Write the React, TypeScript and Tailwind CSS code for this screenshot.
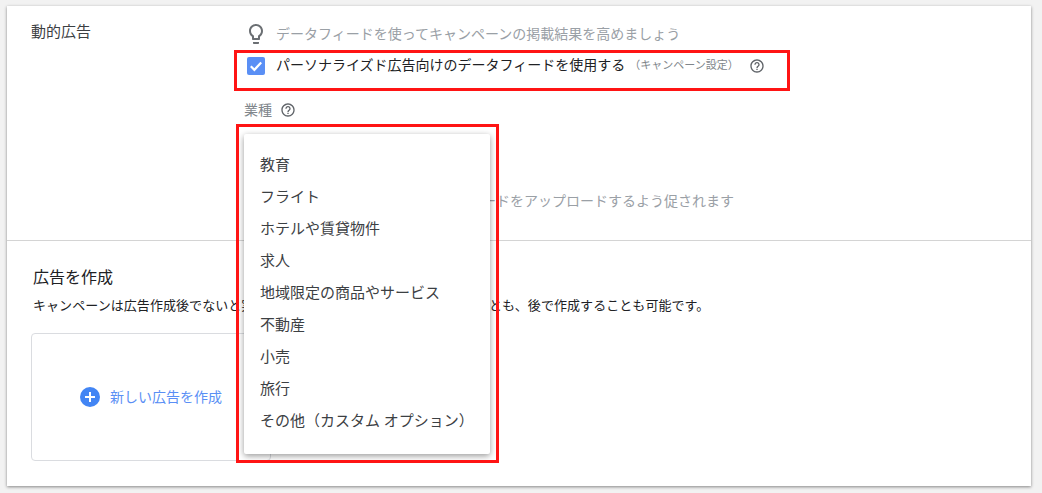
const INDUSTRIES = [
  '教育',
  'フライト',
  'ホテルや賃貸物件',
  '求人',
  '地域限定の商品やサービス',
  '不動産',
  '小売',
  '旅行',
  'その他（カスタム オプション）',
];

function HelpIcon() {
  return (
    <svg viewBox="0 0 24 24" className="w-4 h-4 fill-[#5f6368] shrink-0">
      <path d="M11 18h2v-2h-2v2zm1-16C6.48 2 2 6.48 2 12s4.48 10 10 10 10-4.48 10-10S17.52 2 12 2zm0 18c-4.41 0-8-3.59-8-8s3.59-8 8-8 8 3.59 8 8-3.59 8-8 8zm0-14c-2.21 0-4 1.79-4 4h2c0-1.1.9-2 2-2s2 .9 2 2c0 2-3 1.75-3 5h2c0-2.25 3-2.5 3-5 0-2.21-1.79-4-4-4z" />
    </svg>
  );
}

function BulbIcon() {
  return (
    <svg viewBox="0 0 24 24" className="w-6 h-6 fill-[#6b6f73] shrink-0">
      <path d="M9 21c0 .55.45 1 1 1h4c.55 0 1-.45 1-1v-1H9v1zm3-19C8.14 2 5 5.14 5 9c0 2.38 1.19 4.47 3 5.74V17c0 .55.45 1 1 1h6c.55 0 1-.45 1-1v-2.26c1.81-1.27 3-3.36 3-5.74 0-3.86-3.14-7-7-7zm2.85 11.1l-.85.6V16h-4v-2.3l-.85-.6C7.8 12.16 7 10.63 7 9c0-2.76 2.24-5 5-5s5 2.24 5 5c0 1.63-.8 3.16-2.15 4.1z" />
    </svg>
  );
}

export default function App() {
  return (
    <div className="h-[493px] overflow-hidden bg-[#f2f2f2] pt-[6px] pl-[7px] pr-[11px] font-['Roboto','Noto_Sans_CJK_JP',sans-serif]">
      <div className="relative h-[480px] bg-white shadow-[0_1px_3px_rgba(0,0,0,0.45)]">
        {/* Dynamic ads settings */}
        <div className="flex h-[235px] border-b border-[#d4d4d4] pl-[24px] pt-[16px]">
          <div className="w-[213px] shrink-0 text-[15px] leading-5 text-[#3c4043]">動的広告</div>
          <div className="flex flex-col">
            <div className="flex h-6 items-center gap-2">
              <BulbIcon />
              <span className="text-[14px] text-[#9aa0a6]">データフィードを使ってキャンペーンの掲載結果を高めましょう</span>
            </div>
            <div className="mt-[8px] flex h-[24px] items-center pl-[3px]">
              <div className="flex h-[18px] w-[18px] items-center justify-center rounded-[2px] bg-[#5a8ff5]">
                <svg viewBox="0 0 18 18" className="h-[18px] w-[18px] fill-none stroke-white stroke-[2.2]">
                  <path d="M3.8 9.2 7.4 12.8 14.2 5.6" />
                </svg>
              </div>
              <span className="ml-[11px] -translate-y-[1px] text-[14px] text-[#202124]">パーソナライズド広告向けのデータフィードを使用する</span>
              <span className="ml-[4px] text-[11px] text-[#80868b]">（キャンペーン設定）</span>
              <span className="ml-[10px]"><HelpIcon /></span>
            </div>
            <div className="mt-[22px] flex h-[20px] items-center gap-[8px]">
              <span className="text-[14px] text-[#80868b]">業種</span>
              <HelpIcon />
            </div>
            <div className="mt-[71px] pl-[1px] text-[14px] leading-5 text-[#9aa0a6]">
              業種を選択すると後ほど、データフィードをアップロードするよう促されます
            </div>
          </div>
        </div>

        {/* Create ad */}
        <div className="pl-[24px] pt-[27px]">
          <div className="pl-[2px] text-[16px] leading-5 text-[#202124]">広告を作成</div>
          <div className="mt-[8px] pl-[2px] text-[13px] leading-5 tracking-[0.06px] text-[#202124]">
            キャンペーンは広告作成後でないと実施できません。今すぐ広告を作成することも、後で作成することも可能です。
          </div>
          <div className="mt-[17px] flex h-[128px] w-[240px] items-center justify-center gap-[10px] rounded-[4px] border border-[#dadce0]">
            <svg viewBox="0 0 20 20" className="h-5 w-5 shrink-0">
              <circle cx="10" cy="10" r="10" fill="#4285f4" />
              <path d="M10 5v10M5 10h10" stroke="#fff" strokeWidth="2" />
            </svg>
            <span className="text-[14px] text-[#5a8ff5]">新しい広告を作成</span>
          </div>
        </div>

        {/* Industry dropdown */}
        <div className="absolute left-[237px] top-[128px] w-[246px] rounded-[2px] bg-white pb-[16.5px] pt-[15.5px] shadow-[0_2px_6px_rgba(0,0,0,0.4)]">
          {INDUSTRIES.map(name => (
            <div key={name} className="flex h-8 items-center pl-[16px] text-[15px] text-[#3c4043]">{name}</div>
          ))}
        </div>

        {/* Red annotation frames */}
        <div className="pointer-events-none absolute left-[227px] top-[44px] h-[41px] w-[556px] border-[3px] border-[#ff1414]" />
        <div className="pointer-events-none absolute left-[229px] top-[118px] h-[339px] w-[263px] border-[3px] border-[#ff1414]" />
      </div>
    </div>
  );
}
